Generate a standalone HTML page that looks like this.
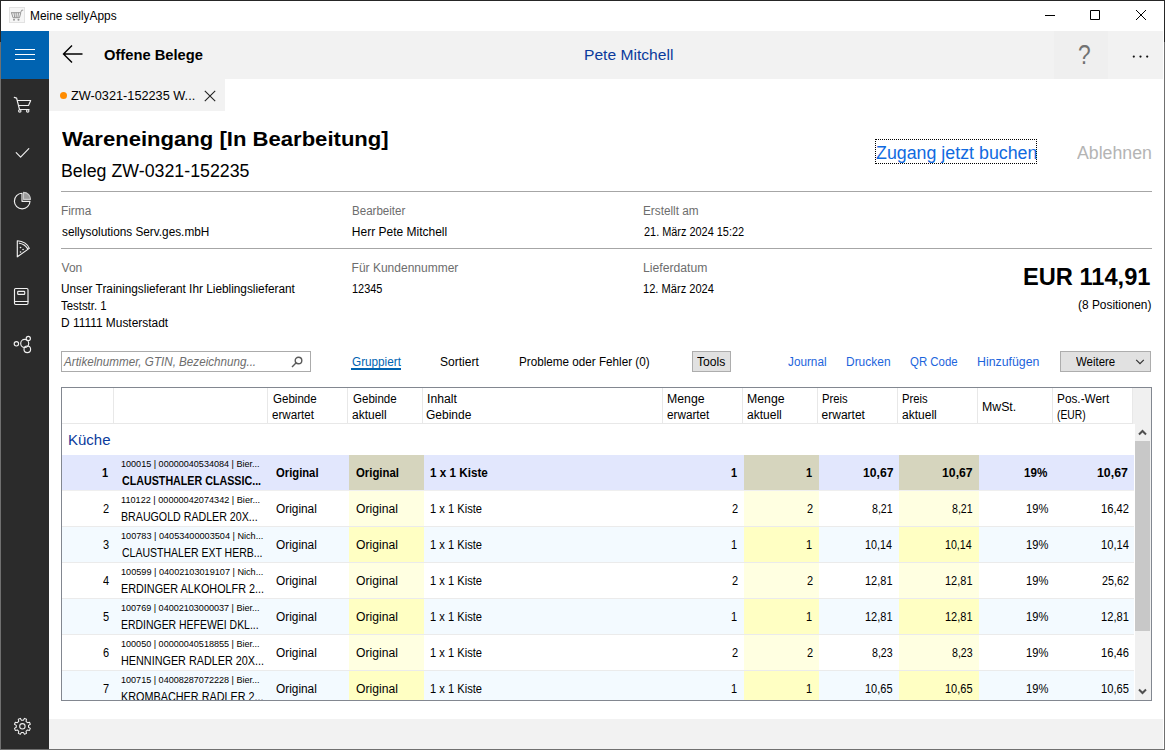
<!DOCTYPE html>
<html lang="de"><head><meta charset="utf-8"><title>Meine sellyApps</title>
<style>
*{box-sizing:border-box;margin:0;padding:0}
html,body{width:1165px;height:750px;overflow:hidden;background:#fff}
body{position:relative;font-family:"Liberation Sans",sans-serif;font-size:12px;color:#000}
.abs,.t{position:absolute;white-space:nowrap}
.t{line-height:1;transform-origin:0 0}
#titlebar{position:absolute;left:1px;top:1px;width:1163px;height:30px;background:#fff}
#hdr{position:absolute;left:49px;top:31px;width:1114px;height:48px;background:#f2f2f2}
#hdrR{position:absolute;left:1054px;top:31px;width:54px;height:48px;background:#efefef}
#burger{position:absolute;left:1px;top:31px;width:48px;height:48px;background:#0063b1}
#side{position:absolute;left:1px;top:79px;width:48px;height:670px;background:#2b2b2b}
#foot{position:absolute;left:49px;top:719px;width:1114px;height:30px;background:#f2f2f2}
#tab{position:absolute;left:49px;top:79px;width:176px;height:32px;background:#f2f2f2}
.bd{position:absolute;background:#262626}
.hl{position:absolute;left:61px;width:1091px;height:1px;background:#a6a6a6}
.tbl{position:absolute;left:61px;top:387px;width:1091px;height:314px;border:1px solid #828790;background:#fff;overflow:hidden}
.row{position:absolute;left:0;width:1072px;height:36px;border-bottom:1px solid #ebebeb;background:#fff}
.row.alt{background:#f3faff}
.row.sel{background:#e2e7fd;border-bottom-color:#efefef}
.row i{position:absolute;top:0;height:35px;background:#ffffe1}
.row.alt i{background:#ffffc3}
.row.sel i{background:#d6d5be}
.th{position:absolute;top:0;height:36px;background:#fff;border-right:1px solid #e8e8e8;border-bottom:1px solid #e8e8e8}

</style></head>
<body>
<div id="titlebar"></div>
<div id="hdr"></div><div id="hdrR"></div>
<div id="burger"></div>
<div id="side"></div>
<div id="foot"></div>
<div id="tab"></div>
<svg class="abs" style="left:9px;top:7px" width="16" height="16" viewBox="0 0 16 16"><rect x="0.5" y="0.5" width="15" height="15" fill="#f6f6f6" stroke="#e2e2e2"/><path d="M2 5h9.500l1.200-2.500h1.500M2.500 5l1.500 5h6.500l1.300-5M5 5l.7 5M7.200 5v5M9.500 5l-.6 5" fill="none" stroke="#969696" stroke-width="1" transform="translate(0 .7)"/><circle cx="5" cy="12.700" r="1" fill="#969696"/><circle cx="9.500" cy="12.700" r="1" fill="#969696"/></svg>
<svg class="abs" style="left:1040px;top:5px" width="120" height="22" viewBox="0 0 120 22"><path d="M5 10.500h10M50.500 5.500h9v9h-9zM96 5l10 10M106 5l-10 10" fill="none" stroke="#000" stroke-width="1"/></svg>
<svg class="abs" style="left:15px;top:47px" width="20" height="16" viewBox="0 0 20 16"><path d="M0 2.500h20M0 7.500h20M0 12.500h20" stroke="#fff" stroke-width="1" fill="none"/></svg>
<svg class="abs" style="left:62px;top:43px" width="22" height="22" viewBox="0 0 22 22"><path d="M1.500 11h19M10 2.500L1.500 11l8.500 8.500" stroke="#000" stroke-width="1.400" fill="none"/></svg>
<svg class="abs" style="left:1132px;top:54px" width="18" height="5" viewBox="0 0 18 5"><circle cx="1.800" cy="2.600" r="1.100" fill="#111"/><circle cx="8.500" cy="2.600" r="1.100" fill="#111"/><circle cx="15.200" cy="2.600" r="1.100" fill="#111"/></svg>
<!-- sidebar icons -->
<svg class="abs" style="left:1px;top:79px" width="48" height="300" viewBox="1 79 48 300" fill="none" stroke="#f0f0f0" stroke-width="1.150" stroke-linejoin="round" stroke-linecap="round">
<path d="M14.300 97.400l2.300.7 2.900 11.400h9.600M17.200 100.500h13.500l-2.200 5H18.600"/><circle cx="19.800" cy="110.900" r="1.200"/><circle cx="27.700" cy="110.900" r="1.200"/>
<path d="M16.200 152.700l4.400 4.400 8.200-8.500"/>
<path d="M22 193.300a7.800 7.800 0 1 0 8 8h-8z"/><path d="M23.500 192.300a7 7 0 0 1 7 7h-7z" fill="#9a9a9a" stroke="#c8c8c8"/>
<path d="M17.300 240.800c5.500.3 10 3.200 12 7.600l-12 8.400zM19.300 243.200c3.600.5 6.600 2.600 8.300 5.400"/><path d="M20.500 247.500h.1M23 249.500h.1M20.500 252h.1" stroke-width="1.600"/>
<rect x="14.500" y="288.500" width="13.500" height="16" rx="1.200"/><path d="M14.500 301.500h13.500"/><rect x="17.700" y="291.300" width="7" height="3" rx=".6"/>
<circle cx="16.400" cy="343.800" r="2.200"/><circle cx="24.700" cy="343.400" r="4"/><circle cx="28.300" cy="338.400" r="2.100"/><circle cx="27.300" cy="349.300" r="3.300"/>
</svg>
<svg class="abs" style="left:12px;top:716px" width="21" height="21" viewBox="12 716 21 21" fill="none" stroke="#f0f0f0" stroke-width="1.050" stroke-linejoin="round"><circle cx="22.400" cy="726.300" r="2.700"/><path d="M28.52 727.27L30.33 728.40L29.49 730.42L27.42 729.94L26.04 731.32L26.52 733.39L24.50 734.23L23.37 732.42L21.43 732.42L20.30 734.23L18.28 733.39L18.76 731.32L17.38 729.94L15.31 730.42L14.47 728.40L16.28 727.27L16.28 725.33L14.47 724.20L15.31 722.18L17.38 722.66L18.76 721.28L18.28 719.21L20.30 718.37L21.43 720.18L23.37 720.18L24.50 718.37L26.52 719.21L26.04 721.28L27.42 722.66L29.49 722.18L30.33 724.20L28.52 725.33z"/></svg>
<!-- tab -->
<div class="abs" style="left:60px;top:92px;width:7px;height:7px;border-radius:4px;background:#ff8c00"></div>
<svg class="abs" style="left:204px;top:90px" width="12" height="12" viewBox="0 0 12 12"><path d="M0.800 0.800l10.400 10.400M11.200 0.800L0.800 11.200" stroke="#222" stroke-width="1.100" fill="none"/></svg>
<div class="abs" style="left:875px;top:139px;width:162px;height:25px;border:1px dotted #000"></div>
<div class="hl" style="top:191px"></div>
<div class="hl" style="top:248px"></div>
<!-- toolbar -->
<div class="abs" style="left:61px;top:351px;width:250px;height:21px;border:1px solid #ababab;background:#fff"></div>
<svg class="abs" style="left:291px;top:356px" width="12" height="12" viewBox="0 0 12 12" fill="none" stroke="#5a5a5a" stroke-width="1.400"><circle cx="7.500" cy="4.500" r="3.300"/><path d="M5.200 6.800L1 11"/></svg>
<div class="abs" style="left:351px;top:368px;width:50px;height:2px;background:#0063b1"></div>
<div class="abs" style="left:692px;top:351px;width:39px;height:21px;border:1px solid #adadad;background:#e1e1e1"></div>
<div class="abs" style="left:1060px;top:351px;width:91px;height:21px;border:1px solid #adadad;background:#e1e1e1"></div>
<svg class="abs" style="left:1135px;top:359px" width="10" height="6" viewBox="0 0 10 6"><path d="M1.200 0.900l3.800 3.800 3.800-3.800" stroke="#333" stroke-width="1.200" fill="none"/></svg>
<div class="tbl">
<div class="row sel" style="top:67px"><i style="left:287px;width:75px"></i><i style="left:682px;width:75px"></i><i style="left:837px;width:80px"></i></div>
<div class="row" style="top:103px"><i style="left:287px;width:75px"></i><i style="left:682px;width:75px"></i><i style="left:837px;width:80px"></i></div>
<div class="row alt" style="top:139px"><i style="left:287px;width:75px"></i><i style="left:682px;width:75px"></i><i style="left:837px;width:80px"></i></div>
<div class="row" style="top:175px"><i style="left:287px;width:75px"></i><i style="left:682px;width:75px"></i><i style="left:837px;width:80px"></i></div>
<div class="row alt" style="top:211px"><i style="left:287px;width:75px"></i><i style="left:682px;width:75px"></i><i style="left:837px;width:80px"></i></div>
<div class="row" style="top:247px"><i style="left:287px;width:75px"></i><i style="left:682px;width:75px"></i><i style="left:837px;width:80px"></i></div>
<div class="row alt" style="top:283px"><i style="left:287px;width:75px"></i><i style="left:682px;width:75px"></i><i style="left:837px;width:80px"></i></div>
<div class="th" style="left:0;width:52px"></div>
<div class="th" style="left:52px;width:154px"></div>
<div class="th" style="left:206px;width:80px"></div>
<div class="th" style="left:286px;width:75px"></div>
<div class="th" style="left:361px;width:240px"></div>
<div class="th" style="left:601px;width:80px"></div>
<div class="th" style="left:681px;width:75px"></div>
<div class="th" style="left:756px;width:80px"></div>
<div class="th" style="left:836px;width:80px"></div>
<div class="th" style="left:916px;width:75px"></div>
<div class="th" style="left:991px;width:80px"></div>
<div class="abs" style="left:1071px;top:0;width:18px;height:36px;background:#f0f0f0"></div>
<div class="abs" style="left:1073px;top:36px;width:16px;height:276px;background:#f0f0f0"></div>
<div class="abs" style="left:1073px;top:53px;width:15px;height:190px;background:#c8c8c8"></div>
<svg class="abs" style="left:1076px;top:41px" width="9" height="7" viewBox="0 0 9 7"><path d="M1 5.500l3.500-3.500 3.500 3.500" stroke="#505050" stroke-width="2" fill="none"/></svg>
<svg class="abs" style="left:1076px;top:300px" width="9" height="7" viewBox="0 0 9 7"><path d="M1 1.500l3.500 3.500 3.500-3.500" stroke="#505050" stroke-width="2" fill="none"/></svg>
</div>
<div class="t" style="left:29.8px;top:10px;font-size:12px;transform:scaleX(0.991)">Meine sellyApps</div>
<div class="t" style="left:1078.0px;top:42px;font-size:27px;transform:scaleX(0.846);color:#727272">?</div>
<div class="t" style="left:104.2px;top:47px;font-size:15px;transform:scaleX(0.980);font-weight:bold">Offene Belege</div>
<div class="t" style="left:583.8px;top:47px;font-size:15.5px;transform:scaleX(1.007);color:#0a3a9c">Pete Mitchell</div>
<div class="t" style="left:71.4px;top:90px;font-size:12px;transform:scaleX(1.060)">ZW-0321-152235 W...</div>
<div class="t" style="left:61.6px;top:129px;font-size:20.5px;transform:scaleX(1.077);font-weight:bold">Wareneingang [In Bearbeitung]</div>
<div class="t" style="left:61.2px;top:163px;font-size:17.5px;transform:scaleX(1.016)">Beleg ZW-0321-152235</div>
<div class="t" style="left:876.4px;top:145px;font-size:17.5px;transform:scaleX(1.018);color:#106ae0">Zugang jetzt buchen</div>
<div class="t" style="left:1076.8px;top:144px;font-size:18px;transform:scaleX(0.984);color:#b4b4b4">Ablehnen</div>
<div class="t" style="left:60.8px;top:205px;font-size:12px;transform:scaleX(0.987);color:#6d6d6d">Firma</div>
<div class="t" style="left:61.6px;top:226px;font-size:12px;transform:scaleX(0.983)">sellysolutions Serv.ges.mbH</div>
<div class="t" style="left:351.6px;top:205px;font-size:12px;transform:scaleX(0.964);color:#6d6d6d">Bearbeiter</div>
<div class="t" style="left:351.8px;top:226px;font-size:12px">Herr Pete Mitchell</div>
<div class="t" style="left:642.6px;top:205px;font-size:12px;transform:scaleX(0.982);color:#6d6d6d">Erstellt am</div>
<div class="t" style="left:643.8px;top:226px;font-size:12px;transform:scaleX(0.909)">21. März 2024 15:22</div>
<div class="t" style="left:61.6px;top:262px;font-size:12px;color:#6d6d6d">Von</div>
<div class="t" style="left:60.8px;top:283px;font-size:12px;transform:scaleX(0.985)">Unser Trainingslieferant Ihr Lieblingslieferant</div>
<div class="t" style="left:61.4px;top:300px;font-size:12px;transform:scaleX(0.949)">Teststr. 1</div>
<div class="t" style="left:60.8px;top:317px;font-size:12px;transform:scaleX(0.993)">D 11111 Musterstadt</div>
<div class="t" style="left:351.6px;top:262px;font-size:12px;color:#6d6d6d">Für Kundennummer</div>
<div class="t" style="left:352.0px;top:283px;font-size:12px;transform:scaleX(0.913)">12345</div>
<div class="t" style="left:642.6px;top:262px;font-size:12px;transform:scaleX(1.016);color:#6d6d6d">Lieferdatum</div>
<div class="t" style="left:642.8px;top:283px;font-size:12px;transform:scaleX(0.925)">12. März 2024</div>
<div class="t" style="left:1022.8px;top:266px;font-size:23.5px;transform:scaleX(1.006);font-weight:bold">EUR 114,91</div>
<div class="t" style="left:1078.4px;top:299px;font-size:12px;transform:scaleX(0.992)">(8 Positionen)</div>
<div class="t" style="left:64.2px;top:356px;font-size:12.5px;transform:scaleX(0.931);font-style:italic;color:#6d6d6d">Artikelnummer, GTIN, Bezeichnung...</div>
<div class="t" style="left:351.6px;top:356px;font-size:12.5px;transform:scaleX(0.939);color:#0063b1">Gruppiert</div>
<div class="t" style="left:440.2px;top:356px;font-size:12.5px;transform:scaleX(0.965)">Sortiert</div>
<div class="t" style="left:518.6px;top:356px;font-size:12.5px;transform:scaleX(0.935)">Probleme oder Fehler (0)</div>
<div class="t" style="left:697.4px;top:356px;font-size:12.5px;transform:scaleX(0.973)">Tools</div>
<div class="t" style="left:788.0px;top:356px;font-size:12.5px;transform:scaleX(0.940);color:#1c64dc">Journal</div>
<div class="t" style="left:845.6px;top:356px;font-size:12.5px;transform:scaleX(0.957);color:#1c64dc">Drucken</div>
<div class="t" style="left:910.4px;top:356px;font-size:12.5px;transform:scaleX(0.914);color:#1c64dc">QR Code</div>
<div class="t" style="left:976.8px;top:356px;font-size:12.5px;transform:scaleX(0.987);color:#1c64dc">Hinzufügen</div>
<div class="t" style="left:1076.4px;top:356px;font-size:12.5px;transform:scaleX(0.915)">Weitere</div>
<div class="t" style="left:272.6px;top:393px;font-size:12px;transform:scaleX(0.964)">Gebinde</div>
<div class="t" style="left:271.6px;top:409px;font-size:12px;transform:scaleX(0.968)">erwartet</div>
<div class="t" style="left:352.6px;top:393px;font-size:12px;transform:scaleX(0.964)">Gebinde</div>
<div class="t" style="left:351.6px;top:409px;font-size:12px;transform:scaleX(0.998)">aktuell</div>
<div class="t" style="left:426.8px;top:393px;font-size:12px;transform:scaleX(1.015)">Inhalt</div>
<div class="t" style="left:426.0px;top:409px;font-size:12px">Gebinde</div>
<div class="t" style="left:666.6px;top:393px;font-size:12px;transform:scaleX(1.023)">Menge</div>
<div class="t" style="left:666.6px;top:409px;font-size:12px;transform:scaleX(0.977)">erwartet</div>
<div class="t" style="left:746.6px;top:393px;font-size:12px;transform:scaleX(1.023)">Menge</div>
<div class="t" style="left:746.6px;top:409px;font-size:12px;transform:scaleX(1.002)">aktuell</div>
<div class="t" style="left:821.6px;top:393px;font-size:12px;transform:scaleX(0.936)">Preis</div>
<div class="t" style="left:821.6px;top:409px;font-size:12px">erwartet</div>
<div class="t" style="left:901.6px;top:393px;font-size:12px;transform:scaleX(0.936)">Preis</div>
<div class="t" style="left:901.6px;top:409px;font-size:12px;transform:scaleX(1.002)">aktuell</div>
<div class="t" style="left:981.6px;top:401px;font-size:12px;transform:scaleX(1.026)">MwSt.</div>
<div class="t" style="left:1056.8px;top:393px;font-size:12px;transform:scaleX(0.985)">Pos.-Wert</div>
<div class="t" style="left:1057.0px;top:409px;font-size:12px;transform:scaleX(0.857)">(EUR)</div>
<div class="t" style="left:67.8px;top:432px;font-size:15.5px;transform:scaleX(0.967);color:#0a3a9c">Küche</div>
<div class="t" style="left:102.4px;top:467px;font-size:12.5px;transform:scaleX(0.880);font-weight:bold">1</div>
<div class="t" style="left:120.8px;top:459px;font-size:9.5px;transform:scaleX(0.953)">100015 | 00000040534084 | Bier...</div>
<div class="t" style="left:121.8px;top:474px;font-size:13px;transform:scaleX(0.823);font-weight:bold">CLAUSTHALER CLASSIC...</div>
<div class="t" style="left:275.8px;top:467px;font-size:12.5px;transform:scaleX(0.900);font-weight:bold">Original</div>
<div class="t" style="left:355.6px;top:467px;font-size:12.5px;transform:scaleX(0.909);font-weight:bold">Original</div>
<div class="t" style="left:430.0px;top:467px;font-size:12.5px;transform:scaleX(0.934);font-weight:bold">1 x 1 Kiste</div>
<div class="t" style="left:731.2px;top:467px;font-size:12.5px;transform:scaleX(0.880);font-weight:bold">1</div>
<div class="t" style="left:806.0px;top:467px;font-size:12.5px;transform:scaleX(0.880);font-weight:bold">1</div>
<div class="t" style="left:862.6px;top:467px;font-size:12.5px;transform:scaleX(0.976);font-weight:bold">10,67</div>
<div class="t" style="left:942.2px;top:467px;font-size:12.5px;transform:scaleX(0.980);font-weight:bold">10,67</div>
<div class="t" style="left:1024.0px;top:467px;font-size:12.5px;transform:scaleX(0.934);font-weight:bold">19%</div>
<div class="t" style="left:1097.2px;top:467px;font-size:12.5px;transform:scaleX(0.987);font-weight:bold">10,67</div>
<div class="t" style="left:102.8px;top:503px;font-size:12.5px;transform:scaleX(0.880)">2</div>
<div class="t" style="left:120.8px;top:495px;font-size:9.5px;transform:scaleX(0.961)">110122 | 00000042074342 | Bier...</div>
<div class="t" style="left:120.8px;top:510px;font-size:13px;transform:scaleX(0.819)">BRAUGOLD RADLER 20X...</div>
<div class="t" style="left:276.0px;top:503px;font-size:12.5px;transform:scaleX(0.948)">Original</div>
<div class="t" style="left:355.8px;top:503px;font-size:12.5px;transform:scaleX(0.971)">Original</div>
<div class="t" style="left:430.2px;top:503px;font-size:12.5px;transform:scaleX(0.891)">1 x 1 Kiste</div>
<div class="t" style="left:732.0px;top:503px;font-size:12.5px;transform:scaleX(0.880)">2</div>
<div class="t" style="left:806.8px;top:503px;font-size:12.5px;transform:scaleX(0.880)">2</div>
<div class="t" style="left:872.0px;top:503px;font-size:12.5px;transform:scaleX(0.850)">8,21</div>
<div class="t" style="left:951.6px;top:503px;font-size:12.5px;transform:scaleX(0.850)">8,21</div>
<div class="t" style="left:1026.0px;top:503px;font-size:12.5px;transform:scaleX(0.893)">19%</div>
<div class="t" style="left:1100.6px;top:503px;font-size:12.5px;transform:scaleX(0.893)">16,42</div>
<div class="t" style="left:102.8px;top:539px;font-size:12.5px;transform:scaleX(0.880)">3</div>
<div class="t" style="left:120.8px;top:531px;font-size:9.5px;transform:scaleX(0.961)">100783 | 04053400003504 | Nich...</div>
<div class="t" style="left:121.8px;top:546px;font-size:13px;transform:scaleX(0.808)">CLAUSTHALER EXT HERB...</div>
<div class="t" style="left:276.0px;top:539px;font-size:12.5px;transform:scaleX(0.948)">Original</div>
<div class="t" style="left:355.8px;top:539px;font-size:12.5px;transform:scaleX(0.971)">Original</div>
<div class="t" style="left:430.2px;top:539px;font-size:12.5px;transform:scaleX(0.891)">1 x 1 Kiste</div>
<div class="t" style="left:731.2px;top:539px;font-size:12.5px;transform:scaleX(0.880)">1</div>
<div class="t" style="left:806.0px;top:539px;font-size:12.5px;transform:scaleX(0.880)">1</div>
<div class="t" style="left:865.0px;top:539px;font-size:12.5px;transform:scaleX(0.860)">10,14</div>
<div class="t" style="left:944.6px;top:539px;font-size:12.5px;transform:scaleX(0.852)">10,14</div>
<div class="t" style="left:1026.0px;top:539px;font-size:12.5px;transform:scaleX(0.893)">19%</div>
<div class="t" style="left:1100.6px;top:539px;font-size:12.5px;transform:scaleX(0.892)">10,14</div>
<div class="t" style="left:102.8px;top:575px;font-size:12.5px;transform:scaleX(0.880)">4</div>
<div class="t" style="left:120.8px;top:567px;font-size:9.5px;transform:scaleX(0.961)">100599 | 04002103019107 | Nich...</div>
<div class="t" style="left:120.8px;top:582px;font-size:13px;transform:scaleX(0.832)">ERDINGER ALKOHOLFR 2...</div>
<div class="t" style="left:276.0px;top:575px;font-size:12.5px;transform:scaleX(0.948)">Original</div>
<div class="t" style="left:355.8px;top:575px;font-size:12.5px;transform:scaleX(0.971)">Original</div>
<div class="t" style="left:430.2px;top:575px;font-size:12.5px;transform:scaleX(0.891)">1 x 1 Kiste</div>
<div class="t" style="left:732.0px;top:575px;font-size:12.5px;transform:scaleX(0.880)">2</div>
<div class="t" style="left:806.8px;top:575px;font-size:12.5px;transform:scaleX(0.880)">2</div>
<div class="t" style="left:865.0px;top:575px;font-size:12.5px;transform:scaleX(0.880)">12,81</div>
<div class="t" style="left:944.6px;top:575px;font-size:12.5px;transform:scaleX(0.879)">12,81</div>
<div class="t" style="left:1026.0px;top:575px;font-size:12.5px;transform:scaleX(0.893)">19%</div>
<div class="t" style="left:1101.6px;top:575px;font-size:12.5px;transform:scaleX(0.859)">25,62</div>
<div class="t" style="left:102.8px;top:611px;font-size:12.5px;transform:scaleX(0.880)">5</div>
<div class="t" style="left:120.8px;top:603px;font-size:9.5px;transform:scaleX(0.953)">100769 | 04002103000037 | Bier...</div>
<div class="t" style="left:120.8px;top:618px;font-size:13px;transform:scaleX(0.804)">ERDINGER HEFEWEI DKL...</div>
<div class="t" style="left:276.0px;top:611px;font-size:12.5px;transform:scaleX(0.948)">Original</div>
<div class="t" style="left:355.8px;top:611px;font-size:12.5px;transform:scaleX(0.971)">Original</div>
<div class="t" style="left:430.2px;top:611px;font-size:12.5px;transform:scaleX(0.891)">1 x 1 Kiste</div>
<div class="t" style="left:731.2px;top:611px;font-size:12.5px;transform:scaleX(0.880)">1</div>
<div class="t" style="left:806.0px;top:611px;font-size:12.5px;transform:scaleX(0.880)">1</div>
<div class="t" style="left:865.0px;top:611px;font-size:12.5px;transform:scaleX(0.880)">12,81</div>
<div class="t" style="left:944.6px;top:611px;font-size:12.5px;transform:scaleX(0.879)">12,81</div>
<div class="t" style="left:1026.0px;top:611px;font-size:12.5px;transform:scaleX(0.893)">19%</div>
<div class="t" style="left:1100.6px;top:611px;font-size:12.5px;transform:scaleX(0.893)">12,81</div>
<div class="t" style="left:102.8px;top:647px;font-size:12.5px;transform:scaleX(0.880)">6</div>
<div class="t" style="left:120.8px;top:639px;font-size:9.5px;transform:scaleX(0.953)">100050 | 00000040518855 | Bier...</div>
<div class="t" style="left:120.8px;top:654px;font-size:13px;transform:scaleX(0.832)">HENNINGER RADLER 20X...</div>
<div class="t" style="left:276.0px;top:647px;font-size:12.5px;transform:scaleX(0.948)">Original</div>
<div class="t" style="left:355.8px;top:647px;font-size:12.5px;transform:scaleX(0.971)">Original</div>
<div class="t" style="left:430.2px;top:647px;font-size:12.5px;transform:scaleX(0.891)">1 x 1 Kiste</div>
<div class="t" style="left:732.0px;top:647px;font-size:12.5px;transform:scaleX(0.880)">2</div>
<div class="t" style="left:806.8px;top:647px;font-size:12.5px;transform:scaleX(0.880)">2</div>
<div class="t" style="left:872.0px;top:647px;font-size:12.5px;transform:scaleX(0.850)">8,23</div>
<div class="t" style="left:951.6px;top:647px;font-size:12.5px;transform:scaleX(0.850)">8,23</div>
<div class="t" style="left:1026.0px;top:647px;font-size:12.5px;transform:scaleX(0.893)">19%</div>
<div class="t" style="left:1100.6px;top:647px;font-size:12.5px;transform:scaleX(0.893)">16,46</div>
<div class="t" style="left:102.8px;top:683px;font-size:12.5px;transform:scaleX(0.880)">7</div>
<div class="t" style="left:120.8px;top:675px;font-size:9.5px;transform:scaleX(0.953)">100715 | 04008287072228 | Bier...</div>
<div class="t" style="left:120.8px;top:690px;font-size:13px;transform:scaleX(0.833)">KROMBACHER RADLER 2...</div>
<div class="t" style="left:276.0px;top:683px;font-size:12.5px;transform:scaleX(0.948)">Original</div>
<div class="t" style="left:355.8px;top:683px;font-size:12.5px;transform:scaleX(0.971)">Original</div>
<div class="t" style="left:430.2px;top:683px;font-size:12.5px;transform:scaleX(0.891)">1 x 1 Kiste</div>
<div class="t" style="left:731.2px;top:683px;font-size:12.5px;transform:scaleX(0.880)">1</div>
<div class="t" style="left:806.0px;top:683px;font-size:12.5px;transform:scaleX(0.880)">1</div>
<div class="t" style="left:865.0px;top:683px;font-size:12.5px;transform:scaleX(0.880)">10,65</div>
<div class="t" style="left:944.6px;top:683px;font-size:12.5px;transform:scaleX(0.879)">10,65</div>
<div class="t" style="left:1026.0px;top:683px;font-size:12.5px;transform:scaleX(0.893)">19%</div>
<div class="t" style="left:1100.6px;top:683px;font-size:12.5px;transform:scaleX(0.893)">10,65</div>
<div class="abs" style="left:61px;top:700px;width:1091px;height:1px;background:#828790"></div>
<div class="abs" style="left:61px;top:701px;width:1091px;height:8px;background:#fff"></div>
<div class="bd" style="left:0;top:0;width:1165px;height:1px"></div>
<div class="bd" style="left:0;top:0;width:1px;height:42px"></div>
<div class="bd" style="left:1164px;top:0;width:1px;height:42px"></div>
<div class="bd" style="left:0;top:42px;width:1px;height:708px;background:#707070"></div>
<div class="bd" style="left:1164px;top:42px;width:1px;height:708px;background:#707070"></div>
<div class="bd" style="left:0;top:749px;width:1165px;height:1px;background:#707070"></div>
</body></html>
